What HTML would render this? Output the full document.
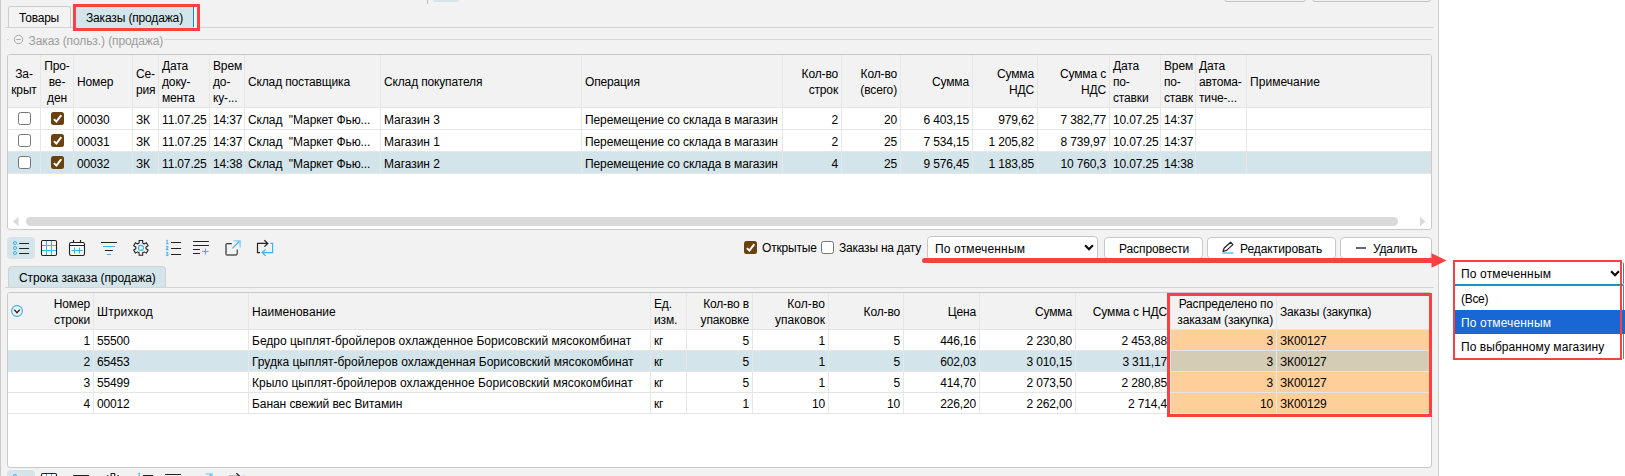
<!DOCTYPE html>
<html lang="ru"><head><meta charset="utf-8"><title>Заказы (продажа)</title>
<style>
html,body{margin:0;padding:0;background:#fff;}
body{width:1625px;height:476px;position:relative;overflow:hidden;font-family:"Liberation Sans",sans-serif;font-size:12px;color:#000;letter-spacing:-0.15px;}
.a{position:absolute;box-sizing:border-box;}
.t{position:absolute;white-space:nowrap;line-height:16px;}
.r{text-align:right;}
.c{text-align:center;}
.cb{position:absolute;box-sizing:border-box;width:13px;height:13px;border:1px solid #767676;border-radius:2.5px;background:#fff;}
.cbc{position:absolute;width:13px;height:13px;border-radius:2.5px;background:#69420f;}
.cbc svg{position:absolute;left:0;top:0;}
.btn{position:absolute;box-sizing:border-box;background:#fff;border:1px solid #c8c8c8;border-radius:4px;height:22px;}
svg{display:block;}
</style></head><body>

<div class="a" style="left:0;top:0;width:1439px;height:476px;background:#f2f2f2;border-right:1px solid #d0d0d0;"></div>
<div class="a" style="left:0;top:0;width:1px;height:476px;background:#cacaca;"></div>
<div class="a" style="left:427px;top:0;width:1px;height:4px;background:#bdbdbd;"></div>
<div class="a" style="left:433px;top:-8px;width:26px;height:10px;background:#d3e5ea;border-radius:3px;"></div>
<div class="a" style="left:1224px;top:-10px;width:82px;height:12px;border:1px solid #c4c4c4;border-radius:3px;"></div>
<div class="a" style="left:1312px;top:-10px;width:119px;height:12px;border:1px solid #c4c4c4;border-radius:3px;"></div>
<div class="a" style="left:5px;top:27px;width:1429px;height:1px;background:#d4d4d4;"></div>
<div class="a" style="left:8px;top:6px;width:63px;height:21px;border:1px solid #cdcdcd;border-bottom:none;border-radius:3px 3px 0 0;background:#f3f3f3;"></div>
<div class="t" style="left:19px;top:10px;letter-spacing:-0.21px;">Товары</div>
<div class="a" style="left:76px;top:7px;width:117px;height:21px;background:#d3e5ea;"></div>
<div class="a" style="left:193px;top:7px;width:1px;height:20px;background:#0f8dc0;"></div>
<div class="a" style="left:194px;top:7px;width:3px;height:21px;background:#faf5f2;"></div>
<div class="t" style="left:86px;top:10px;letter-spacing:-0.15px;">Заказы (продажа)</div>
<div class="a" style="left:73px;top:4px;width:127px;height:27px;border:3px solid #f94141;"></div>
<div class="a" style="left:7px;top:39px;width:2px;height:1px;background:#d8d8d8;"></div>
<div class="a" style="left:164px;top:39px;width:1268px;height:1px;background:#d8d8d8;"></div>
<svg class="a" style="left:13px;top:34px;" width="11" height="11" viewBox="0 0 11 11"><circle cx="5.5" cy="5.5" r="4.2" fill="none" stroke="#a6a6a6" stroke-width="1"/><path d="M3.3 5.5H7.7" stroke="#a6a6a6" stroke-width="1"/></svg>
<div class="t" style="left:28.5px;top:33px;color:#9c9c9c;letter-spacing:-0.1px;">Заказ (польз.) (продажа)</div>
<div class="a" style="left:7px;top:54px;width:1425px;height:176px;background:#fff;border:1px solid #c9c9c9;border-radius:3px;"></div>
<div class="a" style="left:8px;top:55px;width:1423px;height:52px;background:#f2f2f2;border-radius:2px 2px 0 0;"></div>
<div class="a" style="left:8px;top:107px;width:1423px;height:1px;background:#e3e3e3;"></div>
<div class="a" style="left:8px;top:152px;width:1423px;height:21px;background:#d3e5ea;"></div>
<div class="a" style="left:8px;top:129px;width:1423px;height:1px;background:#e6e6e6;"></div>
<div class="a" style="left:8px;top:151px;width:1423px;height:1px;background:#e6e6e6;"></div>
<div class="a" style="left:8px;top:173px;width:1423px;height:1px;background:#e6e6e6;"></div>
<div class="a" style="left:40px;top:55px;width:1px;height:119px;background:#e7e7e7;"></div>
<div class="a" style="left:73px;top:55px;width:1px;height:119px;background:#e7e7e7;"></div>
<div class="a" style="left:132px;top:55px;width:1px;height:119px;background:#e7e7e7;"></div>
<div class="a" style="left:158px;top:55px;width:1px;height:119px;background:#e7e7e7;"></div>
<div class="a" style="left:209px;top:55px;width:1px;height:119px;background:#e7e7e7;"></div>
<div class="a" style="left:244px;top:55px;width:1px;height:119px;background:#e7e7e7;"></div>
<div class="a" style="left:380px;top:55px;width:1px;height:119px;background:#e7e7e7;"></div>
<div class="a" style="left:581px;top:55px;width:1px;height:119px;background:#e7e7e7;"></div>
<div class="a" style="left:782px;top:55px;width:1px;height:119px;background:#e7e7e7;"></div>
<div class="a" style="left:841px;top:55px;width:1px;height:119px;background:#e7e7e7;"></div>
<div class="a" style="left:900px;top:55px;width:1px;height:119px;background:#e7e7e7;"></div>
<div class="a" style="left:972px;top:55px;width:1px;height:119px;background:#e7e7e7;"></div>
<div class="a" style="left:1037px;top:55px;width:1px;height:119px;background:#e7e7e7;"></div>
<div class="a" style="left:1109px;top:55px;width:1px;height:119px;background:#e7e7e7;"></div>
<div class="a" style="left:1160px;top:55px;width:1px;height:119px;background:#e7e7e7;"></div>
<div class="a" style="left:1195px;top:55px;width:1px;height:119px;background:#e7e7e7;"></div>
<div class="a" style="left:1246px;top:55px;width:1px;height:119px;background:#e7e7e7;"></div>
<div class="t c" style="left:8px;width:32px;top:66px;">За-<br>крыт</div>
<div class="t c" style="left:41px;width:32px;top:58px;">Про-<br>ве-<br>ден</div>
<div class="t" style="left:77px;top:74px;">Номер</div>
<div class="t" style="left:136px;top:66px;">Се-<br>рия</div>
<div class="t" style="left:162px;top:58px;">Дата<br>доку-<br>мента</div>
<div class="t" style="left:213px;top:58px;">Врем<br>до-<br>ку-...</div>
<div class="t" style="left:248px;top:74px;">Склад поставщика</div>
<div class="t" style="left:384px;top:74px;">Склад покупателя</div>
<div class="t" style="left:585px;top:74px;">Операция</div>
<div class="t r" style="left:783px;width:55px;top:66px;">Кол-во<br>строк</div>
<div class="t r" style="left:842px;width:55px;top:66px;">Кол-во<br>(всего)</div>
<div class="t r" style="left:901px;width:68px;top:74px;">Сумма</div>
<div class="t r" style="left:973px;width:61px;top:66px;">Сумма<br>НДС</div>
<div class="t r" style="left:1038px;width:68px;top:66px;">Сумма с<br>НДС</div>
<div class="t" style="left:1113px;top:58px;">Дата<br>по-<br>ставки</div>
<div class="t" style="left:1164px;top:58px;">Врем<br>по-<br>ставк</div>
<div class="t" style="left:1199px;top:58px;">Дата<br>автома-<br>тиче-...</div>
<div class="t" style="left:1250px;top:74px;letter-spacing:0.05px;">Примечание</div>
<div class="cb" style="left:18px;top:112px;"></div>
<div class="cbc" style="left:51px;top:112px;"><svg width="13" height="13" viewBox="0 0 13 13"><path d="M2.9 7.1L5.4 9.6L10.3 3.1" fill="none" stroke="#fff" stroke-width="2"/></svg></div>
<div class="t" style="left:77px;top:112px;">00030</div>
<div class="t" style="left:136px;top:112px;">ЗК</div>
<div class="t" style="left:162px;top:112px;">11.07.25</div>
<div class="t" style="left:213px;top:112px;">14:37</div>
<div class="t" style="left:248px;top:112px;letter-spacing:-0.08px;">Склад&nbsp; &quot;Маркет Фью...</div>
<div class="t" style="left:384px;top:112px;letter-spacing:-0.05px;">Магазин 3</div>
<div class="t" style="left:585px;top:112px;letter-spacing:-0.09px;">Перемещение со склада в магазин</div>
<div class="t r" style="left:783px;width:55px;top:112px;">2</div>
<div class="t r" style="left:842px;width:55px;top:112px;">20</div>
<div class="t r" style="left:901px;width:68px;top:112px;">6 403,15</div>
<div class="t r" style="left:973px;width:61px;top:112px;">979,62</div>
<div class="t r" style="left:1038px;width:68px;top:112px;">7 382,77</div>
<div class="t" style="left:1113px;top:112px;">10.07.25</div>
<div class="t" style="left:1164px;top:112px;">14:37</div>
<div class="cb" style="left:18px;top:134px;"></div>
<div class="cbc" style="left:51px;top:134px;"><svg width="13" height="13" viewBox="0 0 13 13"><path d="M2.9 7.1L5.4 9.6L10.3 3.1" fill="none" stroke="#fff" stroke-width="2"/></svg></div>
<div class="t" style="left:77px;top:134px;">00031</div>
<div class="t" style="left:136px;top:134px;">ЗК</div>
<div class="t" style="left:162px;top:134px;">11.07.25</div>
<div class="t" style="left:213px;top:134px;">14:37</div>
<div class="t" style="left:248px;top:134px;letter-spacing:-0.08px;">Склад&nbsp; &quot;Маркет Фью...</div>
<div class="t" style="left:384px;top:134px;letter-spacing:-0.05px;">Магазин 1</div>
<div class="t" style="left:585px;top:134px;letter-spacing:-0.09px;">Перемещение со склада в магазин</div>
<div class="t r" style="left:783px;width:55px;top:134px;">2</div>
<div class="t r" style="left:842px;width:55px;top:134px;">25</div>
<div class="t r" style="left:901px;width:68px;top:134px;">7 534,15</div>
<div class="t r" style="left:973px;width:61px;top:134px;">1 205,82</div>
<div class="t r" style="left:1038px;width:68px;top:134px;">8 739,97</div>
<div class="t" style="left:1113px;top:134px;">10.07.25</div>
<div class="t" style="left:1164px;top:134px;">14:37</div>
<div class="cb" style="left:18px;top:156px;"></div>
<div class="cbc" style="left:51px;top:156px;"><svg width="13" height="13" viewBox="0 0 13 13"><path d="M2.9 7.1L5.4 9.6L10.3 3.1" fill="none" stroke="#fff" stroke-width="2"/></svg></div>
<div class="t" style="left:77px;top:156px;">00032</div>
<div class="t" style="left:136px;top:156px;">ЗК</div>
<div class="t" style="left:162px;top:156px;">11.07.25</div>
<div class="t" style="left:213px;top:156px;">14:38</div>
<div class="t" style="left:248px;top:156px;letter-spacing:-0.08px;">Склад&nbsp; &quot;Маркет Фью...</div>
<div class="t" style="left:384px;top:156px;letter-spacing:-0.05px;">Магазин 2</div>
<div class="t" style="left:585px;top:156px;letter-spacing:-0.09px;">Перемещение со склада в магазин</div>
<div class="t r" style="left:783px;width:55px;top:156px;">4</div>
<div class="t r" style="left:842px;width:55px;top:156px;">25</div>
<div class="t r" style="left:901px;width:68px;top:156px;">9 576,45</div>
<div class="t r" style="left:973px;width:61px;top:156px;">1 183,85</div>
<div class="t r" style="left:1038px;width:68px;top:156px;">10 760,3</div>
<div class="t" style="left:1113px;top:156px;">10.07.25</div>
<div class="t" style="left:1164px;top:156px;">14:38</div>
<div class="a" style="left:26px;top:217px;width:1372px;height:9px;background:#d9d9d9;border-radius:4.5px;"></div>
<svg class="a" style="left:12px;top:216px;" width="8" height="11" viewBox="0 0 8 11"><path d="M6.5 0.8V10.2L1 5.5Z" fill="#d9d9d9"/></svg>
<svg class="a" style="left:1419px;top:216px;" width="8" height="11" viewBox="0 0 8 11"><path d="M1 0.8V10.2L6.5 5.5Z" fill="#d9d9d9"/></svg>
<div class="a" style="left:7px;top:237px;width:28px;height:22px;background:#d3e5ea;border-radius:4px;"></div>
<svg class="a" style="left:12px;top:239px;" width="18" height="18" viewBox="12 239 18 18" fill="none"><g stroke="#3bb5ec" stroke-width="1"><circle cx="15" cy="243.05" r="1.55"/><circle cx="15" cy="248.05" r="1.55"/><circle cx="15" cy="253.05" r="1.55"/></g><path d="M19.6 243.5H28.6M19.6 248.5H28.6M19.6 253.5H28.6" stroke="#222" stroke-width="1.2" stroke-linecap="round"/></svg>
<svg class="a" style="left:40px;top:239px;" width="18" height="18" viewBox="40 239 18 18" fill="none"><rect x="41.5" y="240.5" width="15" height="15" rx="1" fill="#fafafa"/><path d="M46.5 241V255M51.5 241V255M42 245.5H56M42 250.5H56" stroke="#3bb5ec" stroke-width="1"/><rect x="41.5" y="240.5" width="15" height="15" rx="1.2" stroke="#222" stroke-width="1.1"/></svg>
<svg class="a" style="left:68px;top:239px;" width="18" height="18" viewBox="68 239 18 18" fill="none"><rect x="69.5" y="242.5" width="15" height="13" rx="1.7" fill="#fafafa" stroke="#222" stroke-width="1.1"/><path d="M73.5 240V242.5M80.5 240V242.5M70 245.5H84" stroke="#222" stroke-width="1.1"/><path d="M71.6 250.5H82.6M74.5 247.6V253.6M79.5 247.6V253.6" stroke="#3bb5ec" stroke-width="1"/></svg>
<svg class="a" style="left:100px;top:239px;" width="18" height="18" viewBox="100 239 18 18" fill="none"><path d="M101.5 242.5H116.5M105.3 250.5H112.4" stroke="#222" stroke-width="1.1" stroke-linecap="round"/><path d="M103.5 246.5H114.5M107.3 254.5H110.5" stroke="#3bb5ec" stroke-width="1.1" stroke-linecap="round"/></svg>
<svg class="a" style="left:132px;top:239px;" width="18" height="18" viewBox="132 239 18 18" fill="none"><path d="M139.09 243.08L139.11 240.57L142.69 240.57L142.71 243.08L144.17 243.92L146.35 242.68L148.15 245.79L145.98 247.06L145.98 248.74L148.15 250.01L146.35 253.12L144.17 251.88L142.71 252.72L142.69 255.23L139.11 255.23L139.09 252.72L137.63 251.88L135.45 253.12L133.65 250.01L135.82 248.74L135.82 247.06L133.65 245.79L135.45 242.68L137.63 243.92Z" stroke="#222" stroke-width="1.1" stroke-linejoin="round"/><circle cx="140.9" cy="247.9" r="2.5" stroke="#3bb5ec" stroke-width="1.1"/></svg>
<svg class="a" style="left:164px;top:238px;" width="18" height="20" viewBox="164 238 18 20" fill="none"><path d="M171.5 242.5H180.6M171.5 248.5H180.6M171.5 254.5H180.6" stroke="#222" stroke-width="1.2" stroke-linecap="round"/><g transform="translate(165.7 0) scale(0.8 1)" font-family="Liberation Sans, sans-serif" font-size="5.6" font-weight="bold" fill="#33b3ee" stroke="#33b3ee" stroke-width="0.25" letter-spacing="0"><text x="0" y="244">1</text><text x="0" y="250">2</text><text x="0" y="256">3</text></g></svg>
<svg class="a" style="left:192px;top:239px;" width="18" height="18" viewBox="192 239 18 18" fill="none"><path d="M193.5 241.5H208.5M193.5 245.5H208.5M193.5 249.5H199.5M193.5 253.5H199.5" stroke="#222" stroke-width="1.2" stroke-linecap="round"/><path d="M202.2 251.5H208.6M205.4 248.4V254.6" stroke="#3bb5ec" stroke-width="1.1"/></svg>
<svg class="a" style="left:223px;top:238px;" width="20" height="20" viewBox="223 238 20 20" fill="none"><path d="M231.8 243.6H227.2Q226 243.6 226 244.8V253.8Q226 255 227.2 255H236Q237.2 255 237.2 253.8V249.4" stroke="#333" stroke-width="1.1"/><path d="M226 244.4V253.8Q226 255 227.2 255H236.4" stroke="#777" stroke-width="1.6"/><path d="M232.4 248.4L239.8 241" stroke="#3bb5ec" stroke-width="1.2"/><path d="M233.6 240.9H240.1V247.4" stroke="#7fcdf1" stroke-width="1.3"/></svg>
<svg class="a" style="left:255px;top:238px;" width="20" height="20" viewBox="255 238 20 20" fill="none"><path d="M260 252.6H257.5V243.4H267.6M264.4 240.2L267.8 243.4L264.4 246.6" stroke="#222" stroke-width="1.2"/><path d="M270.3 243.4H272.6V252.6H262.4M265.6 249.4L262.2 252.6L265.6 255.8" stroke="#3bb5ec" stroke-width="1.2"/></svg>
<div class="cbc" style="left:744px;top:241px;"><svg width="13" height="13" viewBox="0 0 13 13"><path d="M2.9 7.1L5.4 9.6L10.3 3.1" fill="none" stroke="#fff" stroke-width="2"/></svg></div>
<div class="t" style="left:762px;top:240px;letter-spacing:-0.17px;">Открытые</div>
<div class="cb" style="left:821px;top:241px;"></div>
<div class="t" style="left:839px;top:240px;letter-spacing:-0.22px;">Заказы на дату</div>
<div class="a" style="left:927px;top:236px;width:171px;height:24px;background:#fff;border:1px solid #c6c6c6;border-radius:4px;"></div>
<div class="t" style="left:935px;top:241px;letter-spacing:0.15px;">По отмеченным</div>
<svg class="a" style="left:1083px;top:243px;" width="12" height="9" viewBox="0 0 12 9"><path d="M2.1 2.3L6 6.2L9.9 2.3" fill="none" stroke="#0a0a0a" stroke-width="2.2"/></svg>
<div class="btn" style="left:1104px;top:237px;width:99px;"></div>
<div class="t" style="left:1119px;top:241px;letter-spacing:-0.1px;">Распровести</div>
<div class="btn" style="left:1207px;top:237px;width:129px;"></div>
<svg class="a" style="left:1221px;top:241px;" width="14" height="14" viewBox="0 0 14 14"><path d="M2 10.5L3.2 7L9.6 1.2L11.9 3.6L5.6 9.4Z" fill="none" stroke="#222" stroke-width="1.15" stroke-linejoin="round"/><path d="M1.4 12H12.5" stroke="#3bb3ea" stroke-width="1.2"/></svg>
<div class="t" style="left:1240px;top:241px;letter-spacing:-0.05px;">Редактировать</div>
<div class="btn" style="left:1340px;top:237px;width:92px;"></div>
<div class="a" style="left:1356px;top:247px;width:10px;height:1.5px;background:#666;"></div>
<div class="t" style="left:1373px;top:241px;letter-spacing:-0.2px;">Удалить</div>
<div class="a" style="left:5px;top:287px;width:1429px;height:1px;background:#d4d4d4;"></div>
<div class="a" style="left:8px;top:266px;width:158px;height:21px;background:#d3e5ea;border:1px solid #cfd2d3;border-bottom:none;border-radius:4px 4px 0 0;"></div>
<div class="t" style="left:19px;top:270px;letter-spacing:-0.09px;">Строка заказа (продажа)</div>
<div class="a" style="left:7px;top:292px;width:1425px;height:176px;background:#fff;border:1px solid #c9c9c9;border-radius:3px;"></div>
<div class="a" style="left:8px;top:293px;width:1423px;height:36px;background:#f2f2f2;border-radius:2px 2px 0 0;"></div>
<div class="a" style="left:8px;top:329px;width:1423px;height:1px;background:#e3e3e3;"></div>
<div class="a" style="left:8px;top:351px;width:1423px;height:21px;background:#d3e5ea;"></div>
<div class="a" style="left:1170px;top:330px;width:261px;height:84px;background:#ffcf9a;"></div>
<div class="a" style="left:1170px;top:351px;width:261px;height:21px;background:#d4ccb5;"></div>
<div class="a" style="left:8px;top:350px;width:1423px;height:1px;background:#e5e5e5;"></div>
<div class="a" style="left:8px;top:371px;width:1423px;height:1px;background:#e5e5e5;"></div>
<div class="a" style="left:8px;top:392px;width:1423px;height:1px;background:#e5e5e5;"></div>
<div class="a" style="left:8px;top:413px;width:1423px;height:1px;background:#e5e5e5;"></div>
<div class="a" style="left:93px;top:293px;width:1px;height:121px;background:#e7e7e7;"></div>
<div class="a" style="left:248px;top:293px;width:1px;height:121px;background:#e7e7e7;"></div>
<div class="a" style="left:650px;top:293px;width:1px;height:121px;background:#e7e7e7;"></div>
<div class="a" style="left:686px;top:293px;width:1px;height:121px;background:#e7e7e7;"></div>
<div class="a" style="left:752px;top:293px;width:1px;height:121px;background:#e7e7e7;"></div>
<div class="a" style="left:828px;top:293px;width:1px;height:121px;background:#e7e7e7;"></div>
<div class="a" style="left:903px;top:293px;width:1px;height:121px;background:#e7e7e7;"></div>
<div class="a" style="left:979px;top:293px;width:1px;height:121px;background:#e7e7e7;"></div>
<div class="a" style="left:1075px;top:293px;width:1px;height:121px;background:#e7e7e7;"></div>
<div class="a" style="left:1170px;top:293px;width:1px;height:121px;background:#e7e7e7;"></div>
<div class="a" style="left:1276px;top:293px;width:1px;height:121px;background:#e7e7e7;"></div>
<div class="t r" style="left:8px;width:82px;top:296px;">Номер<br>строки</div>
<div class="t" style="left:97px;top:304px;letter-spacing:0.15px;">Штрихкод</div>
<div class="t" style="left:252px;top:304px;letter-spacing:0.05px;">Наименование</div>
<div class="t" style="left:654px;top:296px;">Ед.<br>изм.</div>
<div class="t r" style="left:687px;width:62px;top:296px;">Кол-во в<br>упаковке</div>
<div class="t r" style="left:753px;width:72px;top:296px;letter-spacing:0.08px;">Кол-во<br>упаковок</div>
<div class="t r" style="left:829px;width:71px;top:304px;">Кол-во</div>
<div class="t r" style="left:904px;width:72px;top:304px;">Цена</div>
<div class="t r" style="left:980px;width:92px;top:304px;">Сумма</div>
<div class="t r" style="left:1076px;width:91px;top:304px;">Сумма с НДС</div>
<div class="t r" style="left:1171px;width:102px;top:296px;">Распределено по<br>заказам (закупка)</div>
<div class="t" style="left:1280px;top:304px;">Заказы (закупка)</div>
<svg class="a" style="left:10px;top:304px;" width="14" height="14" viewBox="0 0 14 14"><circle cx="7" cy="7" r="5.4" fill="none" stroke="#3bb3ea" stroke-width="1.2"/><path d="M4.2 5.6L7 8.7L9.8 5.6" fill="none" stroke="#222" stroke-width="1.4"/></svg>
<div class="t r" style="left:8px;width:82px;top:333px;">1</div>
<div class="t" style="left:97px;top:333px;">55500</div>
<div class="t" style="left:252px;top:333px;letter-spacing:0.0px;">Бедро цыплят-бройлеров охлажденное Борисовский мясокомбинат</div>
<div class="t" style="left:654px;top:333px;">кг</div>
<div class="t r" style="left:687px;width:62px;top:333px;">5</div>
<div class="t r" style="left:753px;width:72px;top:333px;">1</div>
<div class="t r" style="left:829px;width:71px;top:333px;">5</div>
<div class="t r" style="left:904px;width:72px;top:333px;">446,16</div>
<div class="t r" style="left:980px;width:92px;top:333px;">2 230,80</div>
<div class="t r" style="left:1076px;width:91px;top:333px;">2 453,88</div>
<div class="t r" style="left:1171px;width:102px;top:333px;">3</div>
<div class="t" style="left:1280px;top:333px;">ЗК00127</div>
<div class="t r" style="left:8px;width:82px;top:354px;">2</div>
<div class="t" style="left:97px;top:354px;">65453</div>
<div class="t" style="left:252px;top:354px;letter-spacing:0.0px;">Грудка цыплят-бройлеров охлажденная Борисовский мясокомбинат</div>
<div class="t" style="left:654px;top:354px;">кг</div>
<div class="t r" style="left:687px;width:62px;top:354px;">5</div>
<div class="t r" style="left:753px;width:72px;top:354px;">1</div>
<div class="t r" style="left:829px;width:71px;top:354px;">5</div>
<div class="t r" style="left:904px;width:72px;top:354px;">602,03</div>
<div class="t r" style="left:980px;width:92px;top:354px;">3 010,15</div>
<div class="t r" style="left:1076px;width:91px;top:354px;">3 311,17</div>
<div class="t r" style="left:1171px;width:102px;top:354px;">3</div>
<div class="t" style="left:1280px;top:354px;">ЗК00127</div>
<div class="t r" style="left:8px;width:82px;top:375px;">3</div>
<div class="t" style="left:97px;top:375px;">55499</div>
<div class="t" style="left:252px;top:375px;letter-spacing:0.0px;">Крыло цыплят-бройлеров охлажденное Борисовский мясокомбинат</div>
<div class="t" style="left:654px;top:375px;">кг</div>
<div class="t r" style="left:687px;width:62px;top:375px;">5</div>
<div class="t r" style="left:753px;width:72px;top:375px;">1</div>
<div class="t r" style="left:829px;width:71px;top:375px;">5</div>
<div class="t r" style="left:904px;width:72px;top:375px;">414,70</div>
<div class="t r" style="left:980px;width:92px;top:375px;">2 073,50</div>
<div class="t r" style="left:1076px;width:91px;top:375px;">2 280,85</div>
<div class="t r" style="left:1171px;width:102px;top:375px;">3</div>
<div class="t" style="left:1280px;top:375px;">ЗК00127</div>
<div class="t r" style="left:8px;width:82px;top:396px;">4</div>
<div class="t" style="left:97px;top:396px;">00012</div>
<div class="t" style="left:252px;top:396px;letter-spacing:-0.07px;">Банан свежий вес Витамин</div>
<div class="t" style="left:654px;top:396px;">кг</div>
<div class="t r" style="left:687px;width:62px;top:396px;">1</div>
<div class="t r" style="left:753px;width:72px;top:396px;">10</div>
<div class="t r" style="left:829px;width:71px;top:396px;">10</div>
<div class="t r" style="left:904px;width:72px;top:396px;">226,20</div>
<div class="t r" style="left:980px;width:92px;top:396px;">2 262,00</div>
<div class="t r" style="left:1076px;width:91px;top:396px;">2 714,4</div>
<div class="t r" style="left:1171px;width:102px;top:396px;">10</div>
<div class="t" style="left:1280px;top:396px;">ЗК00129</div>
<div class="a" style="left:1167px;top:293px;width:265px;height:124px;border:3px solid #f94141;"></div>
<div class="a" style="left:7px;top:470px;width:28px;height:22px;background:#d3e5ea;border-radius:4px;"></div>
<svg class="a" style="left:12px;top:472px;" width="18" height="18" viewBox="12 239 18 18" fill="none"><g stroke="#3bb5ec" stroke-width="1"><circle cx="15" cy="243.05" r="1.55"/><circle cx="15" cy="248.05" r="1.55"/><circle cx="15" cy="253.05" r="1.55"/></g><path d="M19.6 243.5H28.6M19.6 248.5H28.6M19.6 253.5H28.6" stroke="#222" stroke-width="1.2" stroke-linecap="round"/></svg>
<svg class="a" style="left:40px;top:472px;" width="18" height="18" viewBox="40 239 18 18" fill="none"><rect x="41.5" y="240.5" width="15" height="15" rx="1" fill="#fafafa"/><path d="M46.5 241V255M51.5 241V255M42 245.5H56M42 250.5H56" stroke="#3bb5ec" stroke-width="1"/><rect x="41.5" y="240.5" width="15" height="15" rx="1.2" stroke="#222" stroke-width="1.1"/></svg>
<svg class="a" style="left:72px;top:472px;" width="18" height="18" viewBox="100 239 18 18" fill="none"><path d="M101.5 242.5H116.5M105.3 250.5H112.4" stroke="#222" stroke-width="1.1" stroke-linecap="round"/><path d="M103.5 246.5H114.5M107.3 254.5H110.5" stroke="#3bb5ec" stroke-width="1.1" stroke-linecap="round"/></svg>
<svg class="a" style="left:104px;top:472px;" width="18" height="18" viewBox="132 239 18 18" fill="none"><path d="M139.09 243.08L139.11 240.57L142.69 240.57L142.71 243.08L144.17 243.92L146.35 242.68L148.15 245.79L145.98 247.06L145.98 248.74L148.15 250.01L146.35 253.12L144.17 251.88L142.71 252.72L142.69 255.23L139.11 255.23L139.09 252.72L137.63 251.88L135.45 253.12L133.65 250.01L135.82 248.74L135.82 247.06L133.65 245.79L135.45 242.68L137.63 243.92Z" stroke="#222" stroke-width="1.1" stroke-linejoin="round"/><circle cx="140.9" cy="247.9" r="2.5" stroke="#3bb5ec" stroke-width="1.1"/></svg>
<svg class="a" style="left:136px;top:471px;" width="18" height="20" viewBox="164 238 18 20" fill="none"><path d="M171.5 242.5H180.6M171.5 248.5H180.6M171.5 254.5H180.6" stroke="#222" stroke-width="1.2" stroke-linecap="round"/><g transform="translate(165.7 0) scale(0.8 1)" font-family="Liberation Sans, sans-serif" font-size="5.6" font-weight="bold" fill="#33b3ee" stroke="#33b3ee" stroke-width="0.25" letter-spacing="0"><text x="0" y="244">1</text><text x="0" y="250">2</text><text x="0" y="256">3</text></g></svg>
<svg class="a" style="left:164px;top:472px;" width="18" height="18" viewBox="192 239 18 18" fill="none"><path d="M193.5 241.5H208.5M193.5 245.5H208.5M193.5 249.5H199.5M193.5 253.5H199.5" stroke="#222" stroke-width="1.2" stroke-linecap="round"/><path d="M202.2 251.5H208.6M205.4 248.4V254.6" stroke="#3bb5ec" stroke-width="1.1"/></svg>
<svg class="a" style="left:195px;top:471px;" width="20" height="20" viewBox="223 238 20 20" fill="none"><path d="M231.8 243.6H227.2Q226 243.6 226 244.8V253.8Q226 255 227.2 255H236Q237.2 255 237.2 253.8V249.4" stroke="#333" stroke-width="1.1"/><path d="M226 244.4V253.8Q226 255 227.2 255H236.4" stroke="#777" stroke-width="1.6"/><path d="M232.4 248.4L239.8 241" stroke="#3bb5ec" stroke-width="1.2"/><path d="M233.6 240.9H240.1V247.4" stroke="#7fcdf1" stroke-width="1.3"/></svg>
<svg class="a" style="left:227px;top:471px;" width="20" height="20" viewBox="255 238 20 20" fill="none"><path d="M260 252.6H257.5V243.4H267.6M264.4 240.2L267.8 243.4L264.4 246.6" stroke="#222" stroke-width="1.2"/><path d="M270.3 243.4H272.6V252.6H262.4M265.6 249.4L262.2 252.6L265.6 255.8" stroke="#3bb5ec" stroke-width="1.2"/></svg>
<svg class="a" style="left:915px;top:250px;" width="540" height="22" viewBox="915 250 540 22"><path d="M924.5 260.5H1433" stroke="#f94141" stroke-width="5" stroke-linecap="round" fill="none"/><path d="M1431.5 253.2L1446.5 260.5L1431.5 267.8Z" fill="#f94141"/></svg>
<div class="a" style="left:1455px;top:262px;width:169px;height:23px;background:#fff;border-right:1px solid #1e8cc8;border-radius:0 2px 2px 0;"></div>
<div class="a" style="left:1455px;top:283.5px;width:168px;height:1.5px;background:#1c88c6;"></div>
<div class="a" style="left:1455px;top:285px;width:169px;height:74px;background:#fff;border:1px solid #7a7a7a;border-left:none;border-bottom:none;"></div>
<div class="a" style="left:1455px;top:310px;width:170px;height:24px;background:#1967d2;"></div>
<div class="t" style="left:1461px;top:266px;letter-spacing:0.15px;">По отмеченным</div>
<svg class="a" style="left:1609px;top:269px;" width="12" height="9" viewBox="0 0 12 9"><path d="M2.1 2.3L6 6.2L9.9 2.3" fill="none" stroke="#0a0a0a" stroke-width="2.2"/></svg>
<div class="t" style="left:1461px;top:291px;letter-spacing:-0.3px;">(Все)</div>
<div class="t" style="left:1461px;top:315px;letter-spacing:0.15px;color:#fff;">По отмеченным</div>
<div class="t" style="left:1461px;top:339px;letter-spacing:0.06px;">По выбранному магазину</div>
<div class="a" style="left:1453px;top:260px;width:169px;height:100px;border:2px solid #f94141;"></div>
</body></html>
